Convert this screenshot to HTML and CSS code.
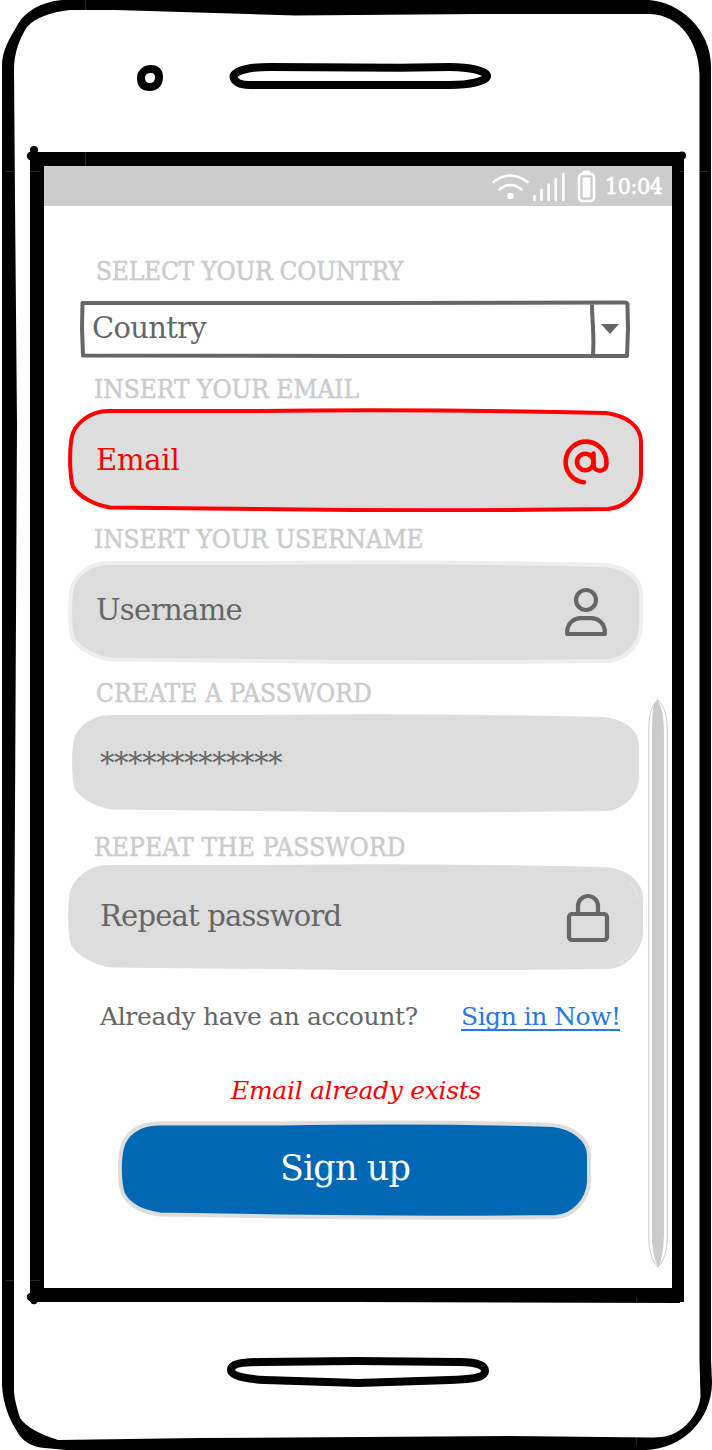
FILE: index.html
```html
<!DOCTYPE html>
<html lang="en">
<head>
<meta charset="utf-8">
<title>Sign up</title>
<link rel="stylesheet" href="styles.css">
</head>
<body>
<svg width="0" height="0" class="defs">
  <symbol id="box" viewBox="0 0 575 104" preserveAspectRatio="none">
    <path d="M40 3H190Q362 1 538 5C560 8 573 19 573 34V67C572 86 556 100 540 101Q362 103.5 190 101L42 99.500C26 97 12 89 5 79C2 69 1 47 3.500 30C6 16 22 3 40 3Z"/>
  </symbol>
</svg>
<main class="phone">
  <svg class="frame" viewBox="0 0 712 1450">
    <path fill-rule="evenodd" d="M62 0C40 2 25 12 18 24C9 40 2 50 2 66V1385C3 1405 10 1420 15 1428C22 1442 32 1447 45 1448L66 1450H646C682 1449 712 1420 712 1382L711 1360V66C711 30 680 2 649 0ZM70 10C50 12 35 18 27 27C20 38 14 52 14 70L15 200L17 425L14 1000V1390C14 1398 17 1408 20 1418C27 1428 40 1434 58 1440L200 1438L510 1436L650 1437.5C660 1437.5 670 1437 680 1430C688 1425 699 1412 700.500 1397L699.500 1360V75C699 42 680 15 650 14H480L356 15L295 15.500L115 10Z"/>
    <path fill-rule="evenodd" d="M30 152H684V1302H30ZM44 166V1288H672V166Z"/>
    <circle cx="34" cy="150" r="4"/><circle cx="31" cy="156" r="4.200"/><circle cx="682" cy="155.500" r="4"/>
    <circle cx="31" cy="1297" r="4.200"/><circle cx="34" cy="1300" r="4.200"/>
    <path d="M356 1300H680V1303L356 1302Z"/>
    <path class="seam" d="M85.500 0V10M85.500 152V166M6 171.500H14M30 171.500H40M680 171.500H684M700 171.500H708M6 1280.500H14M30 1280.500H40M636.500 1297V1303M636.500 1438V1446"/>
    <g class="slot">
      <path d="M151 69C156 69 159 72 159 77C159 83 156 87 150 87C144 87 141 84 141 78C141 72 146 69 151 69Z"/>
      <path d="M233.500 76C236 70 250 67 270 67L400 67.800L450 67C470 67 487 71 487 76C487 81 470 85 450 85H250C240 85 233.500 82 233.500 76Z"/>
      <path d="M231 1370C231 1364 240 1362.300 260 1362L356 1361L460 1362C475 1362 485 1365 485 1371C485 1377 475 1379 450 1380L358 1383L265 1380C245 1379 231 1376 231 1370Z"/>
    </g>
  </svg>

  <section class="screen">
    <header class="status">
      <svg class="status-icons" viewBox="0 0 106 36">
        <g class="line">
          <path d="M2.500 13Q19 0 36.500 13M8.500 20.500Q19 11.500 30.500 20.500"/>
          <path d="M43.500 27V31M50.500 21V31M57.700 15.500V31M64.800 10V31M72.300 5V31"/>
          <rect x="88" y="5" width="15" height="27" rx="3.500"/>
        </g>
        <path d="M91 4Q91 1.500 93.500 1.500H97.500Q100 1.500 100 4V5H91ZM91.700 8.500H99.300V28.500H91.700Z"/>
        <circle cx="19.500" cy="27" r="3.200"/>
      </svg>
      <time class="clock">10:04</time>
    </header>

    <div class="content">
      <form class="form">
        <label class="label l-country">SELECT YOUR COUNTRY</label>
        <div class="select">
          <svg class="shape" viewBox="0 0 550 58">
            <path class="select-line" d="M2.500 3H300L545 2.500Q548 2.500 547.500 6L548 28L547 56H270L3 55.500L2 28ZM512 4C512 22 514.500 34 513 55"/>
            <path class="caret" d="M521 24H539L530 34Z"/>
          </svg>
          <span class="value v-country">Country</span>
        </div>

        <label class="label l-email">INSERT YOUR EMAIL</label>
        <div class="field error">
          <svg class="shape"><use href="#box"/></svg>
          <span class="value v-email">Email</span>
          <svg class="icon" width="48" height="52" viewBox="0 -4 48 52"><circle cx="23.300" cy="24" r="8.300"/><path d="M31.500 15.500V26.500a6.400 6.200 0 0 0 12.900 0V24A20.400 20.400 0 1 0 22 44.300"/></svg>
        </div>

        <label class="label l-username">INSERT YOUR USERNAME</label>
        <div class="field username">
          <svg class="shape"><use href="#box"/></svg>
          <span class="value v-username">Username</span>
          <svg class="icon" width="48" height="52" viewBox="0 -2 48 52"><circle cx="24" cy="14" r="10"/><path d="M5.200 48V46C5.200 37 12 32.200 19 32.200H29C36 32.200 42.800 37 42.800 46V48Z"/></svg>
        </div>

        <label class="label l-create">CREATE A PASSWORD</label>
        <div class="field password">
          <svg class="shape"><use href="#box"/></svg>
          <span class="value v-stars">*************</span>
        </div>

        <label class="label l-repeat">REPEAT THE PASSWORD</label>
        <div class="field repeat">
          <svg class="shape"><use href="#box"/></svg>
          <span class="value v-repeat">Repeat password</span>
          <svg class="icon" width="48" height="52" viewBox="0 -2 48 52"><rect x="5" y="22" width="38" height="26" rx="3"/><path d="M14 21V14a10 10 0 0 1 20 0V21"/></svg>
          <svg class="shape gloss" viewBox="0 0 575 104"><path d="M562 17Q569 25 570 33M569 79Q563 94 549 98"/></svg>
        </div>

        <p class="signin"><span class="question">Already have an account?</span><a class="link">Sign in Now!</a></p>
        <p class="message"><span class="message-text">Email already exists</span></p>
        <div class="button">
          <svg class="shape" viewBox="0 0 473 100">
            <path d="M40 3.500H162Q312 1 435 5C455 7 471 20 471 35V62C470 80 455 96 438 97Q302 98.500 162 96.500L42 94.500C24 92 11 85 5 74C1 62 1 40 4 28C7 14 21 3.500 40 3.500Z"/>
          </svg>
          <span class="button-text">Sign up</span>
        </div>
      </form>

      <svg class="scrollbar" viewBox="0 0 20 570">
        <path class="track" d="M10 1C3 6 .8 18 .8 30V540C1 552 4 562 10 568C16 562 19 552 19.200 540V30C19.200 18 17 8 10 1Z"/>
        <path d="M9.500 0L11 4C14 8 16 18 16 36V535C15.500 548 14.500 558 11.500 566L10 570L9 566C5.500 556 4 548 4 535V36C4 18 5 9 6 5Z"/>
      </svg>
    </div>
  </section>
</main>
</body>
</html>
```
FILE: styles.css
```css
body {
  margin: 0;
  background: #fff;
  color: #666;
  font-family: "Roboto Slab", "DejaVu Serif", serif;
}
.defs { position: absolute; }
.phone {
  position: relative;
  box-sizing: border-box;
  width: 712px;
  height: 1450px;
  padding: 166px 40px 162px 44px;
  overflow: hidden;
}
.frame { position: absolute; left: 0; top: 0; width: 712px; height: 1450px; }
.slot { fill: none; stroke: #000; stroke-width: 8; }
.seam { fill: none; stroke: #444; stroke-width: .6; }
.screen { position: relative; width: 628px; height: 1122px; }

.status {
  display: flex;
  justify-content: flex-end;
  align-items: center;
  box-sizing: border-box;
  height: 40px;
  padding-right: 10px;
  background: #ccc;
  color: #fff;
}
.status-icons { width: 106px; height: 36px; margin: 1px 8px 0 0; fill: #fff; }
.line { fill: none; stroke: #fff; stroke-width: 2.6; stroke-linecap: round; }
.label, .clock { font-family: "Roboto Slab", "DejaVu Serif Condensed", "DejaVu Serif", serif; font-stretch: condensed; }
.clock { width: 57px; font-size: 23px; line-height: 40px; letter-spacing: -.4px; white-space: nowrap; -webkit-text-stroke: .7px #fff; }

.content { display: grid; grid-template-columns: 575px 20px; column-gap: 5px; padding-left: 24px; }
.form { display: flex; flex-direction: column; padding-top: 50px; }
.label { padding-left: 26px; height: 30px; font-size: 26px; line-height: 30px; color: #ccc; white-space: nowrap; -webkit-text-stroke: .5px #ccc; }
.l-country, .l-create { padding-left: 28px; }
.l-country { letter-spacing: -.2px; }
.l-username { letter-spacing: -.08px; }
.l-create { letter-spacing: .12px; }
.l-repeat { letter-spacing: .2px; }

.shape { position: absolute; left: 0; top: 0; width: 100%; height: 100%; overflow: visible; }
.select, .field, .button { position: relative; display: flex; align-items: center; box-sizing: border-box; }
.select { width: 550px; height: 58px; margin: 14px 0 16px 12px; padding: 0 0 2px 12px; }
.select-line { fill: none; stroke: #666; stroke-width: 4; stroke-linejoin: round; }
.caret { fill: #666; }
.value { position: relative; font-size: 29px; line-height: 40px; white-space: nowrap; }
.v-country { letter-spacing: -.7px; }
.v-email { letter-spacing: -.2px; }
.v-username { letter-spacing: -.6px; }
.v-stars { letter-spacing: -.5px; }
.v-repeat { letter-spacing: -.8px; }

.field { justify-content: space-between; width: 575px; height: 104px; padding: 0 33px 4px 28px; fill: #ddd; }
.icon { position: relative; fill: none; stroke: #666; stroke-width: 4.2; stroke-linecap: round; stroke-linejoin: round; }
.error { margin: 4px 0 12px; padding-bottom: 0; color: red; stroke: red; stroke-width: 4; }
.error .icon { stroke: red; stroke-width: 4.6; }
.username { margin: 6px 0 14px; stroke: #eee; stroke-width: 4; }
.password { width: 571px; height: 102px; margin: 4px 0 18px 2px; padding: 0 0 0 30px; }
.repeat { height: 106px; margin: 2px 0 32px; padding: 0 31px 2px 32px; stroke: #ddd; stroke-width: 4; }
.gloss { fill: none; stroke: #eee; stroke-width: 1; }

.signin { display: flex; margin: 0; padding-left: 32px; font-size: 25px; line-height: 30px; white-space: nowrap; }
.question { width: 361px; letter-spacing: -.35px; }
.link { width: 159px; height: 27px; border-bottom: 2px solid #2878e6; color: #2878e6; letter-spacing: -.5px; }
.message { height: 30px; margin: 44px 0 14px; padding-left: 163px; color: red; font-size: 25px; font-style: italic; line-height: 30px; letter-spacing: -.3px; white-space: nowrap; }
.button { width: 473px; height: 100px; margin-left: 50px; padding: 0 0 4px 162px; fill: #0067b5; stroke: #ddd; stroke-width: 4; }
.button-text { position: relative; color: #fff; font-size: 35px; line-height: 50px; letter-spacing: -.9px; white-space: nowrap; }
.scrollbar { width: 20px; height: 570px; margin-top: 493px; fill: #ccc; }
.track { fill: none; stroke: #ccc; stroke-width: 1; }
```
